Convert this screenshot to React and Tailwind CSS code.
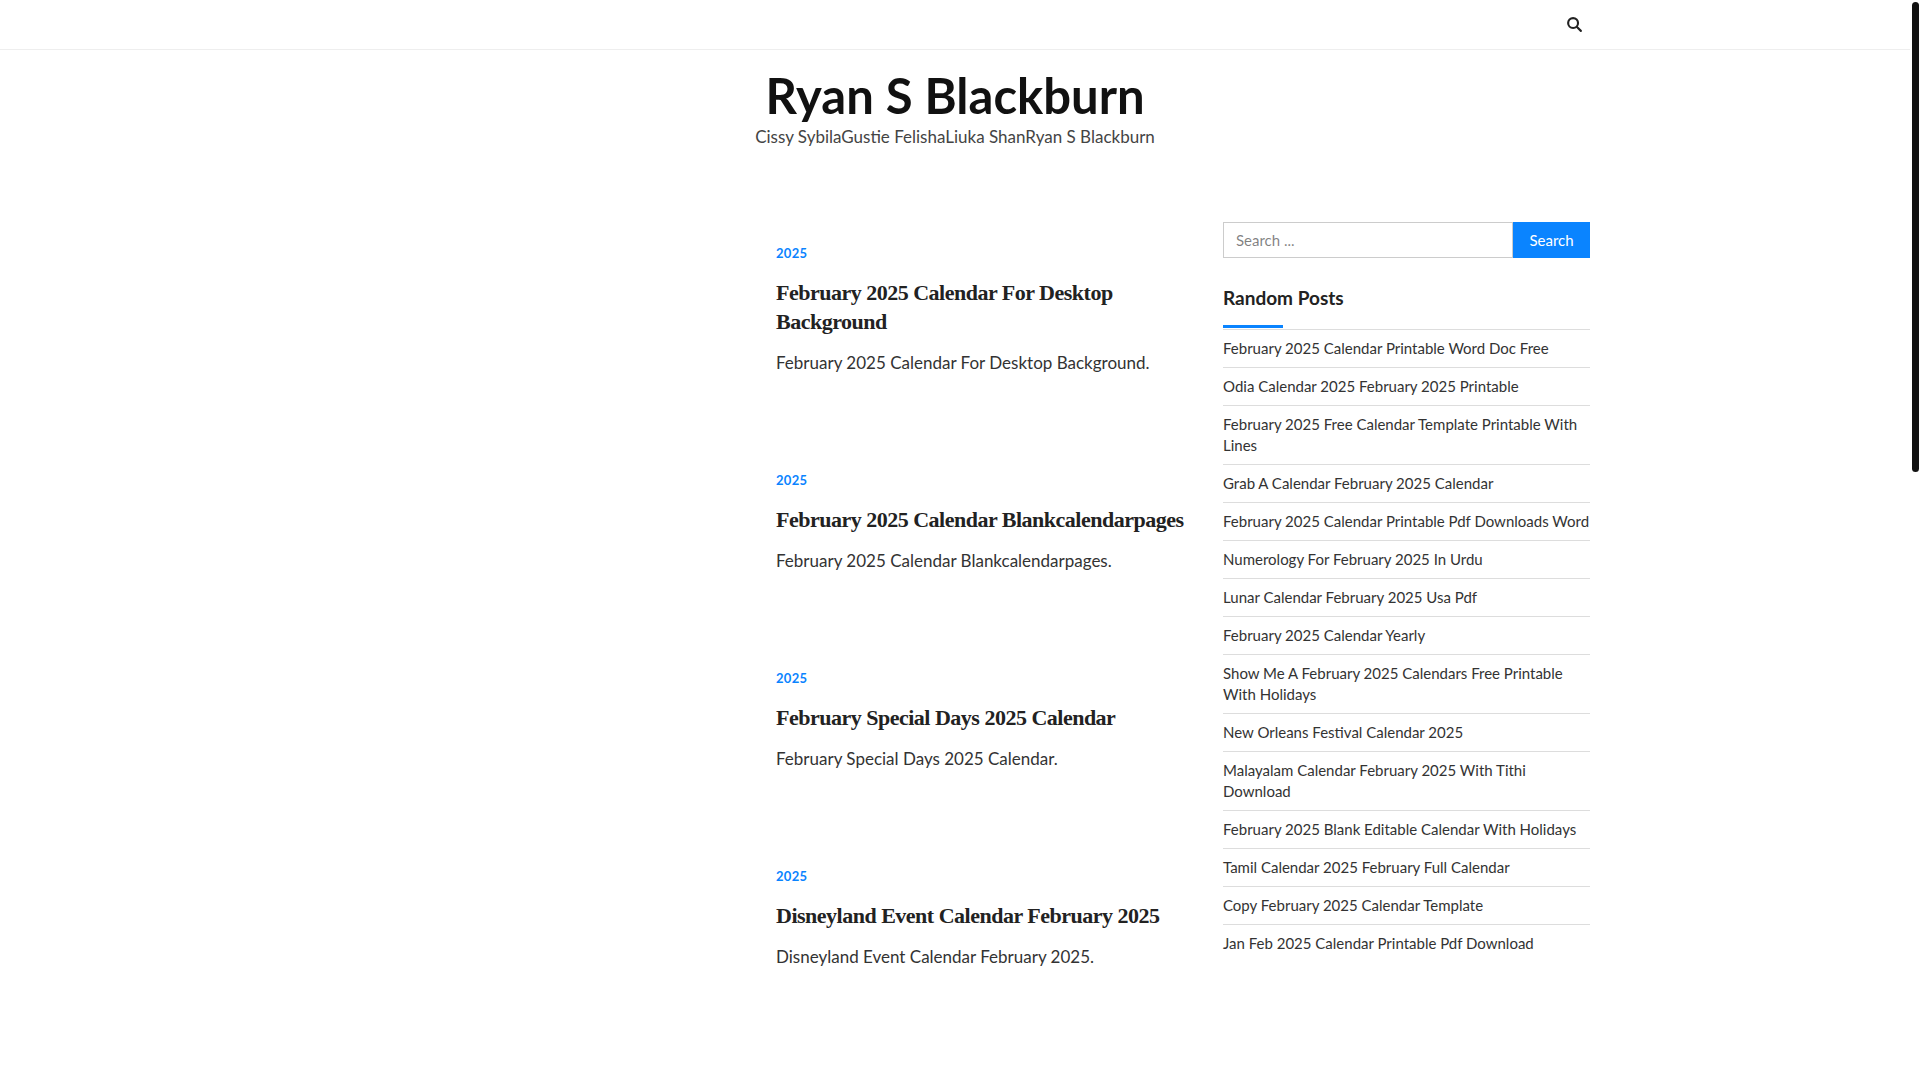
import React from "react"

const posts = [
  { title: "February 2025 Calendar For Desktop Background", excerpt: "February 2025 Calendar For Desktop Background." },
  { title: "February 2025 Calendar Blankcalendarpages", excerpt: "February 2025 Calendar Blankcalendarpages." },
  { title: "February Special Days 2025 Calendar", excerpt: "February Special Days 2025 Calendar." },
  { title: "Disneyland Event Calendar February 2025", excerpt: "Disneyland Event Calendar February 2025." },
]

const random = [
  "February 2025 Calendar Printable Word Doc Free",
  "Odia Calendar 2025 February 2025 Printable",
  "February 2025 Free Calendar Template Printable With Lines",
  "Grab A Calendar February 2025 Calendar",
  "February 2025 Calendar Printable Pdf Downloads Word",
  "Numerology For February 2025 In Urdu",
  "Lunar Calendar February 2025 Usa Pdf",
  "February 2025 Calendar Yearly",
  "Show Me A February 2025 Calendars Free Printable With Holidays",
  "New Orleans Festival Calendar 2025",
  "Malayalam Calendar February 2025 With Tithi Download",
  "February 2025 Blank Editable Calendar With Holidays",
  "Tamil Calendar 2025 February Full Calendar",
  "Copy February 2025 Calendar Template",
  "Jan Feb 2025 Calendar Printable Pdf Download",
]

const App = () => {
  return (
    <div className="flex min-h-[1080px] bg-white" style={{ fontFamily: "Lato, 'Open Sans', sans-serif" }}>
      <div className="flex-1">
        <div className="h-[50px] border-b border-[#eeeeee] flex items-center">
          <div className="ml-[1566px]">
            <svg width="17" height="17" viewBox="0 0 24 24" fill="none" stroke="#222" strokeWidth="3" strokeLinecap="round">
              <circle cx="10" cy="10" r="7" />
              <path d="M15.5 15.5 21 21" />
            </svg>
          </div>
        </div>

        <div className="flex flex-col items-center pt-[16px]">
          <h1 className="text-[49px] font-bold text-[#111] leading-[58px]">Ryan S Blackburn</h1>
          <p className="mt-[1px] text-[17px] text-[#444] leading-[24px]">Cissy SybilaGustie FelishaLiuka ShanRyan S Blackburn</p>
        </div>

        <div className="flex ml-[776px] mt-[73px] gap-[27px]">
          <div className="w-[420px] flex flex-col">
            {posts.map((p, i) => (
              <div key={i} className={i === 0 ? "pt-[22px]" : "pt-[96px]"}>
                <div className="text-[13px] font-bold text-[#0a84ff] tracking-wide">2025</div>
                <h2 className="mt-[14px] text-[22px] font-bold text-[#222] leading-[29px] tracking-[-0.5px]" style={{ fontFamily: "'Liberation Serif', serif" }}>{p.title}</h2>
                <p className="mt-[14px] text-[17px] text-[#333]">{p.excerpt}</p>
              </div>
            ))}
          </div>

          <div className="w-[367px]">
            <div className="flex h-[36px]">
              <input className="flex-1 border border-[#cccccc] px-3 text-[15px] outline-none" placeholder="Search ..." />
              <button className="w-[77px] bg-[#0a84ff] text-white text-[15px]">Search</button>
            </div>
            <h3 className="mt-[26px] text-[19px] font-bold text-[#222]">Random Posts</h3>
            <div className="mt-[12px] h-[3px] w-[60px] bg-[#0a84ff]" />
            <ul className="border-t border-[#dddddd] mt-[1px]">
              {random.map((r, i) => (
                <li key={i} className="border-b border-[#dddddd] py-[8px] text-[15px] leading-[21px] text-[#333] last:border-b-0">{r}</li>
              ))}
            </ul>
          </div>
        </div>
      </div>
      <div className="w-[10px] pt-[2px] pl-[2px]">
        <div className="h-[470px] w-[7px] rounded-full bg-[#111]" />
      </div>
    </div>
  )
}

export default App
